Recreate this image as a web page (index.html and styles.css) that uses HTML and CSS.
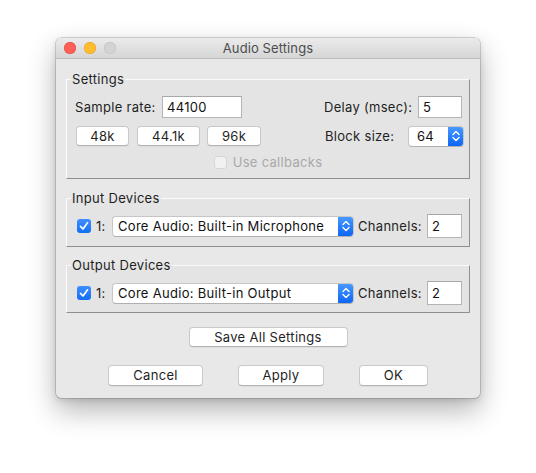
FILE: index.html
```html
<!DOCTYPE html>
<html>
<head>
<meta charset="utf-8">
<link rel="stylesheet" href="styles.css">
</head>
<body>
<div class="window">
  <div class="titlebar">
    <div class="lights">
      <span class="light red"></span>
      <span class="light yellow"></span>
      <span class="light gray"></span>
    </div>
    <div class="title">Audio Settings</div>
    <div></div>
  </div>
  <div class="content">
    <fieldset class="group settings">
      <legend>Settings</legend>
      <div class="row row1">
        <div class="left">
          <span class="lbl w-sr">Sample rate:</span>
          <span class="field w-80">44100</span>
        </div>
        <div class="right r1">
          <span class="lbl w-delay">Delay (msec):</span>
          <span class="field w-44">5</span>
        </div>
      </div>
      <div class="row row2">
        <div class="left buttons">
          <span class="btn w-53">48k</span>
          <span class="btn w-63">44.1k</span>
          <span class="btn w-54">96k</span>
        </div>
        <div class="right r2">
          <span class="lbl w-block">Block size:</span>
          <span class="combo w-56 small">
            <span class="combo-text">64</span>
            <span class="stepper"><svg width="16" height="20" viewBox="0 0 16 20"><path d="M5 8.5 L8 5.5 L11 8.5 M5 11.5 L8 14.5 L11 11.5" fill="none" stroke="#fff" stroke-width="1.4" stroke-linecap="round" stroke-linejoin="round"/></svg></span>
          </span>
        </div>
      </div>
      <div class="row row3">
        <span class="check disabled"></span>
        <span class="disabled-text">Use callbacks</span>
      </div>
    </fieldset>

    <fieldset class="group devices">
      <legend>Input Devices</legend>
      <div class="row dev">
        <span class="check on"><svg width="14" height="14" viewBox="0 0 14 14"><path d="M3.5 7.3 L6 10 L10.5 3.8" fill="none" stroke="#fff" stroke-width="1.7" stroke-linecap="round" stroke-linejoin="round"/></svg></span>
        <span class="num">1:</span>
        <span class="combo w-242">
          <span class="combo-text">Core Audio: Built-in Microphone</span>
          <span class="stepper"><svg width="16" height="20" viewBox="0 0 16 20"><path d="M5 8.5 L8 5.5 L11 8.5 M5 11.5 L8 14.5 L11 11.5" fill="none" stroke="#fff" stroke-width="1.4" stroke-linecap="round" stroke-linejoin="round"/></svg></span>
        </span>
        <span class="lbl w-ch">Channels:</span>
        <span class="field w-35 tall">2</span>
      </div>
    </fieldset>

    <fieldset class="group devices out">
      <legend>Output Devices</legend>
      <div class="row dev">
        <span class="check on"><svg width="14" height="14" viewBox="0 0 14 14"><path d="M3.5 7.3 L6 10 L10.5 3.8" fill="none" stroke="#fff" stroke-width="1.7" stroke-linecap="round" stroke-linejoin="round"/></svg></span>
        <span class="num">1:</span>
        <span class="combo w-242">
          <span class="combo-text">Core Audio: Built-in Output</span>
          <span class="stepper"><svg width="16" height="20" viewBox="0 0 16 20"><path d="M5 8.5 L8 5.5 L11 8.5 M5 11.5 L8 14.5 L11 11.5" fill="none" stroke="#fff" stroke-width="1.4" stroke-linecap="round" stroke-linejoin="round"/></svg></span>
        </span>
        <span class="lbl w-ch">Channels:</span>
        <span class="field w-35 tall">2</span>
      </div>
    </fieldset>

    <div class="save-row">
      <span class="btn w-159">Save All Settings</span>
    </div>
    <div class="action-row">
      <span class="btn big w-95">Cancel</span>
      <span class="btn big w-86">Apply</span>
      <span class="btn big w-69">OK</span>
    </div>
  </div>
</div>
</body>
</html>
```

FILE: styles.css
```css
* { box-sizing: border-box; }
html, body { margin: 0; padding: 0; background: #ffffff; }
body {
  font-family: "Inter", "Liberation Sans", sans-serif;
  font-size: 13px;
  letter-spacing: 0.3px;
  color: #1f1f1f;
  width: 536px;
  height: 473px;
  overflow: hidden;
}
.window {
  margin: 38px 0 0 56px;
  width: 424px;
  height: 360px;
  background: #e8e8e8;
  border-radius: 5px;
  box-shadow: 0 0 0 0.5px rgba(0,0,0,0.28), 0 12px 28px rgba(0,0,0,0.30), 0 2px 6px rgba(0,0,0,0.12);
  overflow: hidden;
}
.titlebar {
  height: 21px;
  display: grid;
  grid-template-columns: 1fr auto 1fr;
  align-items: center;
  background: linear-gradient(#ebebeb, #d6d6d6);
  border-bottom: 1px solid #bdbdbd;
}
.lights { display: flex; gap: 8px; padding-left: 8px; }
.light { width: 12px; height: 12px; border-radius: 50%; display: block; }
.red { background: #fe5f57; box-shadow: inset 0 0 0 0.5px #e1463f; }
.yellow { background: #febc2e; box-shadow: inset 0 0 0 0.5px #dfa024; }
.gray { background: #d3d3d3; box-shadow: inset 0 0 0 0.5px #bcbcbc; }
.title { color: #4d4d4d; font-size: 13px; line-height: 20px; letter-spacing: 0.1px; }

.content { padding: 12px 10px 0 10px; }

.group {
  margin: 0;
  padding: 0;
  min-width: 0;
  width: 404px;
  border: 1px solid;
  border-color: #fbfbfb #8f8f8f #8f8f8f #fbfbfb;
  background: #e4e4e4;
}
.group legend {
  margin-left: 4px;
  padding: 0 1px;
  line-height: 16px;
  font-size: 13px;
  color: #1f1f1f;
}
.row { display: flex; align-items: center; }
.settings .row1 { margin-top: 9px; height: 22px; justify-content: space-between; padding-left: 8px; padding-right: 7px; }
.settings .row2 { margin-top: 7px; height: 22px; justify-content: space-between; padding-left: 9px; padding-right: 5px; }
.settings .row3 { margin-top: 7px; height: 16px; margin-bottom: 8px; justify-content: center; gap: 6px; }
.left, .right { display: flex; align-items: center; }
.buttons { gap: 8px; }
.buttons .w-63 { margin-right: -1px; }

.lbl { display: block; white-space: nowrap; }
.w-sr { width: 87px; }
.w-delay { width: 94px; }
.w-block { width: 83px; }
.w-ch { width: 73px; padding-left: 4px; }

.field {
  display: block;
  height: 22px;
  line-height: 20px;
  background: #fff;
  border: 1px solid #b4b4b4;
  border-top-color: #a8a8a8;
  padding-left: 4px;
  color: #111;
}
.field.tall { height: 24px; line-height: 22px; }
.w-80 { width: 80px; }
.w-44 { width: 44px; }
.w-35 { width: 35px; }

.btn {
  display: block;
  height: 20px;
  line-height: 18px;
  text-align: center;
  background: #ffffff;
  border: 1px solid #c9c9c9;
  border-bottom-color: #b3b3b3;
  border-radius: 4px;
  box-shadow: 0 0.5px 0.5px rgba(0,0,0,0.08);
  color: #1f1f1f;
}
.btn.big { height: 21px; line-height: 19px; }
.w-53 { width: 53px; }
.w-63 { width: 63px; }
.w-54 { width: 54px; }
.w-159 { width: 159px; }
.w-95 { width: 95px; }
.w-86 { width: 86px; }
.w-69 { width: 69px; }

.combo {
  display: flex;
  height: 21px;
  background: #fff;
  border: 1px solid #c6c6c6;
  border-bottom-color: #b0b0b0;
  border-radius: 4px;
  overflow: hidden;
}
.combo.small .combo-text { padding-left: 8px; }
.combo-text { flex: 1; padding-left: 5px; line-height: 19px; white-space: nowrap; overflow: hidden; color: #111; }
.stepper {
  width: 16px;
  flex: none;
  margin: -1px -1px -1px 0;
  background: linear-gradient(#4a9bff, #0b63f3);
  display: flex;
  align-items: center;
  justify-content: center;
}
.stepper svg { display: block; }
.w-56 { width: 56px; }
.w-242 { width: 242px; }

.check {
  display: block;
  width: 14px;
  height: 14px;
  border-radius: 3px;
  flex: none;
}
.check.on { background: linear-gradient(#3f8eff, #1170f5); }
.check.on svg { display: block; }
.check.disabled { width: 13px; height: 13px; background: #f1f1f1; border: 1px solid #d6d6d6; }
.disabled-text { color: #a9a9a9; }

.devices { margin-top: 11px; }
.devices.out { margin-top: 10px; }
.dev { margin-top: 8px; margin-bottom: 8px; height: 24px; padding-left: 10px; }
.out .dev { margin-bottom: 7px; }
.num { display: block; width: 21px; padding-left: 5px; }

.save-row { display: flex; justify-content: center; margin-top: 14px; }
.action-row { display: flex; justify-content: center; gap: 35px; margin-top: 18px; }
```
